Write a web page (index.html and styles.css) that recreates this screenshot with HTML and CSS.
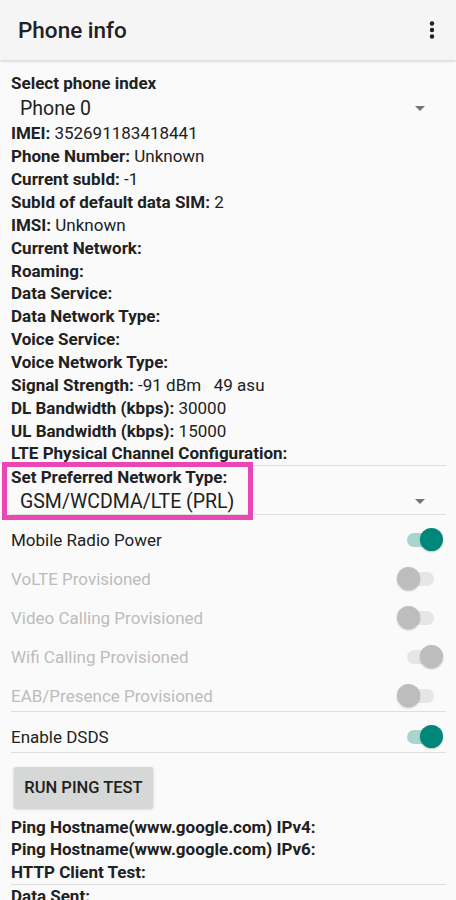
FILE: index.html
```html
<!DOCTYPE html>
<html>
<head>
<meta charset="utf-8">
<link rel="stylesheet" href="styles.css">
</head>
<body>
<div class="toolbar">
  <div class="title">Phone info</div>
  <svg class="overflow" width="6" height="18" viewBox="0 0 6 18"><circle cx="3" cy="2.5" r="2.2"/><circle cx="3" cy="9" r="2.2"/><circle cx="3" cy="15.5" r="2.2"/></svg>
</div>
<div class="content">
  <div class="line"><b>Select phone index</b></div>
  <div class="spinner"><span>Phone 0</span><i class="arrow"></i></div>
  <div class="line"><b>IMEI:</b> 352691183418441</div>
  <div class="line"><b>Phone Number:</b> Unknown</div>
  <div class="line"><b>Current subId:</b> -1</div>
  <div class="line"><b>SubId of default data SIM:</b> 2</div>
  <div class="line"><b>IMSI:</b> Unknown</div>
  <div class="line"><b>Current Network:</b></div>
  <div class="line"><b>Roaming:</b></div>
  <div class="line"><b>Data Service:</b></div>
  <div class="line"><b>Data Network Type:</b></div>
  <div class="line"><b>Voice Service:</b></div>
  <div class="line"><b>Voice Network Type:</b></div>
  <div class="line"><b>Signal Strength:</b> <span class="pre">-91 dBm   49 asu</span></div>
  <div class="line"><b>DL Bandwidth (kbps):</b> 30000</div>
  <div class="line"><b>UL Bandwidth (kbps):</b> 15000</div>
  <div class="line"><b>LTE Physical Channel Configuration:</b></div>
  <div class="divider"></div>
  <div class="pref">
    <div class="line"><b>Set Preferred Network Type:</b></div>
    <div class="spinner short"><span>GSM/WCDMA/LTE (PRL)</span><i class="arrow"></i></div>
    <div class="highlight"></div>
  </div>
  <div class="divider"></div>
  <div class="toggles">
    <div class="row"><span>Mobile Radio Power</span><span class="switch on"><span class="track"></span><span class="thumb"></span></span></div>
    <div class="row disabled"><span>VoLTE Provisioned</span><span class="switch"><span class="track"></span><span class="thumb"></span></span></div>
    <div class="row disabled"><span>Video Calling Provisioned</span><span class="switch"><span class="track"></span><span class="thumb"></span></span></div>
    <div class="row disabled"><span>Wifi Calling Provisioned</span><span class="switch on"><span class="track"></span><span class="thumb"></span></span></div>
    <div class="row disabled"><span>EAB/Presence Provisioned</span><span class="switch"><span class="track"></span><span class="thumb"></span></span></div>
  </div>
  <div class="divider"></div>
  <div class="toggles">
    <div class="row"><span>Enable DSDS</span><span class="switch on"><span class="track"></span><span class="thumb"></span></span></div>
  </div>
  <div class="divider"></div>
  <button class="btn">RUN PING TEST</button>
  <div class="line"><b>Ping Hostname(www.google.com) IPv4:</b></div>
  <div class="line"><b>Ping Hostname(www.google.com) IPv6:</b></div>
  <div class="line"><b>HTTP Client Test:</b></div>
  <div class="divider"></div>
  <div class="line"><b>Data Sent:</b></div>
</div>
</body>
</html>
```
FILE: styles.css
```css
html, body {
  margin: 0;
  padding: 0;
  background: #fafafa;
  font-family: Roboto, "Noto Sans", sans-serif;
  color: #212121;
  overflow: hidden;
}
.toolbar {
  height: 60px;
  background: #f5f5f5;
  display: flex;
  align-items: center;
  justify-content: space-between;
  padding: 0 21px 0 18px;
  box-shadow: 0 1px 3px rgba(0,0,0,0.18);
  position: relative;
  z-index: 1;
}
.title {
  font-size: 22.5px;
  font-weight: 500;
  color: #212121;
}
.overflow {
  fill: #212121;
}
.content {
  padding: 12px 10px 0 11px;
}
.line {
  font-size: 17px;
  line-height: 22.86px;
  height: 22.86px;
  white-space: nowrap;
}
.line b {
  font-weight: 700;
}
.pre {
  white-space: pre;
}
.spinner {
  height: 27.5px;
  display: flex;
  align-items: center;
  justify-content: space-between;
  padding: 0 21px 0 9px;
  font-size: 19.5px;
}
.spinner.short {
  height: 24.5px;
}
.arrow {
  width: 0;
  height: 0;
  border-left: 5.5px solid transparent;
  border-right: 5.5px solid transparent;
  border-top: 5.5px solid #757575;
}
.divider {
  height: 1px;
  background: #dedede;
}
.pref {
  position: relative;
}
.highlight {
  position: absolute;
  left: -9px;
  top: -4px;
  width: 241px;
  height: 48px;
  border: 5px solid #ea46b6;
  pointer-events: none;
}
.toggles {
  padding-top: 10px;
}
.row {
  height: 30px;
  display: flex;
  align-items: center;
  justify-content: space-between;
  font-size: 17px;
  color: #212121;
  margin-bottom: 9px;
}
.toggles .row:last-child {
  margin-bottom: 0;
}
.row.disabled {
  color: #bcbcbc;
}
.switch {
  position: relative;
  width: 46px;
  height: 24px;
  margin-right: 3px;
}
.track {
  position: absolute;
  left: 10px;
  top: 5px;
  width: 27px;
  height: 14px;
  border-radius: 7px;
  background: #e6e6e6;
}
.thumb {
  position: absolute;
  left: 0;
  top: 0;
  width: 23px;
  height: 23px;
  border-radius: 50%;
  background: #bdbdbd;
  box-shadow: 0 1px 2px rgba(0,0,0,0.22);
}
.switch.on .thumb {
  left: 23px;
}
.row:not(.disabled) .switch.on .track {
  background: #a9d5cf;
}
.row:not(.disabled) .switch.on .thumb {
  background: #00877a;
}
.btn {
  display: block;
  margin: 14.5px 0 7.5px 3px;
  width: 139px;
  height: 41px;
  border: none;
  border-radius: 2px;
  background: #d6d7d7;
  box-shadow: 0 1px 3px rgba(0,0,0,0.22);
  font-family: Roboto, "Noto Sans", sans-serif;
  font-size: 16.5px;
  font-weight: 500;
  color: #212121;
  padding: 0;
}
```
